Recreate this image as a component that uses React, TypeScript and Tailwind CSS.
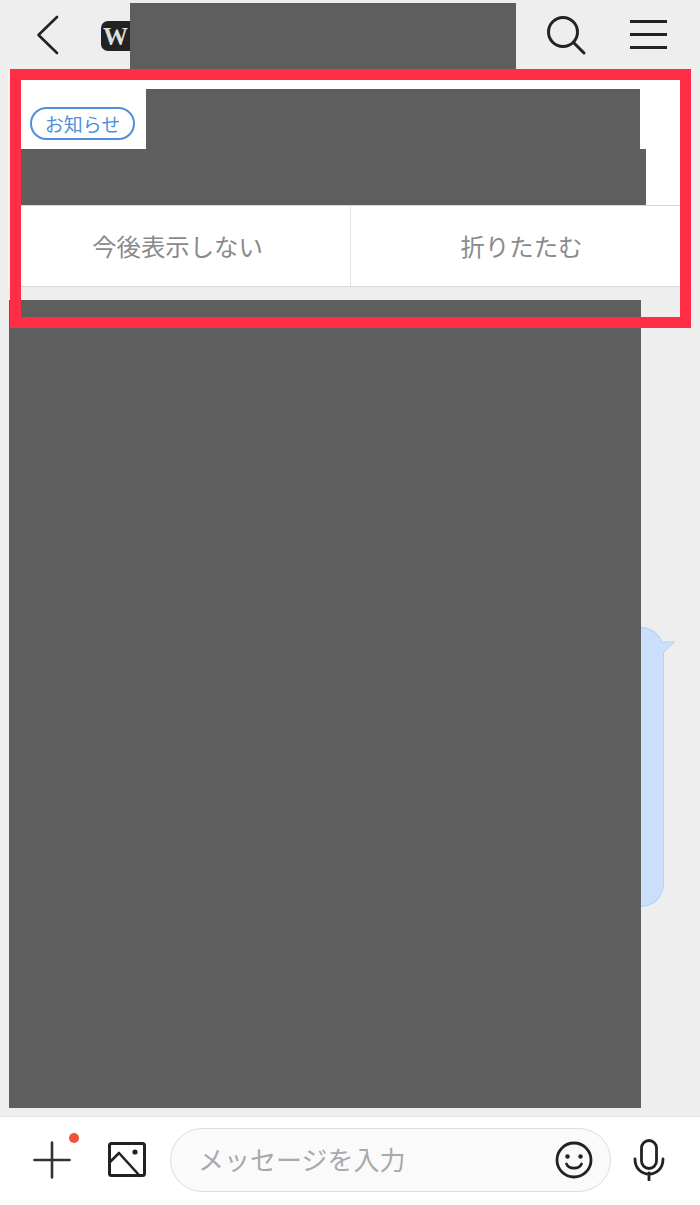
import React from "react";

const Redacted: React.FC<{ className: string }> = ({ className }) => (
  <div className={`bg-[#5e5e5e] ${className}`} />
);

const App: React.FC = () => {
  return (
    <div className="relative flex min-h-[1205px] w-[700px] flex-col overflow-hidden bg-[#eeeeee] font-['Noto_Sans_CJK_JP',sans-serif]">
      {/* Header */}
      <header className="flex h-[69px] shrink-0 items-center">
        <svg className="ml-[34px] mt-[1px] h-[44px] w-[28px]" viewBox="0 0 28 44" fill="none">
          <path d="M23 4 L4.5 22 L23 40" stroke="#222" strokeWidth="2.6" strokeLinecap="round" strokeLinejoin="round" />
        </svg>
        <div className="ml-[39px] mt-[3px] flex h-[30px] w-[29px] items-center justify-center rounded-l-[7px] bg-[#222222] font-['Liberation_Serif',serif] text-[25px] font-bold leading-none text-[#dedede]">
          W
        </div>
        <Redacted className="h-[66px] w-[386px] self-end" />
        <svg className="ml-[28px] h-[44px] w-[44px]" viewBox="0 0 44 44" fill="none">
          <circle cx="19" cy="19" r="14.5" stroke="#222" strokeWidth="3" />
          <path d="M29.5 29.5 L40 40" stroke="#222" strokeWidth="3" strokeLinecap="round" />
        </svg>
        <div className="ml-[42px] flex w-[37px] flex-col gap-[10px]">
          <div className="h-[3px] bg-[#222222]" />
          <div className="h-[3px] bg-[#222222]" />
          <div className="h-[3px] bg-[#222222]" />
        </div>
      </header>

      {/* Notice card */}
      <section className="relative ml-[8px] mt-[3px] h-[215px] w-[684px] shrink-0 border-x-2 border-[#f4f4f4] bg-white">
        <div className="flex h-[133px] items-start pl-[20px] pt-[35px]">
          <span className="flex h-[33px] w-[105px] items-center justify-center rounded-full border-2 border-[#4f8fd6] text-[19px] leading-none text-[#4f8fd6]">
            お知らせ
          </span>
        </div>
        <Redacted className="absolute left-[136px] top-[17px] h-[60px] w-[494px]" />
        <Redacted className="absolute left-[11px] top-[77px] h-[56px] w-[625px]" />
        <div className="flex h-[82px] border-y border-[#d8d8d8] text-[24.4px] text-[#8a8a8a]">
          <button className="flex w-[341px] items-center justify-center border-r border-[#e2e2e2] pr-[5px]">
            今後表示しない
          </button>
          <button className="flex flex-1 items-center justify-center pl-[2px]">折りたたむ</button>
        </div>
      </section>

      {/* Chat area */}
      <main className="flex flex-1 pl-[9px] pt-[13px]">
        <Redacted className="h-[808px] w-[632px]" />
        <div className="relative mt-[327px] h-[280px] w-[23px] rounded-r-[24px] border border-l-0 border-[#b9d0ec] bg-[#c9dffb]">
          <svg className="absolute left-[21px] top-[10px] h-[24px] w-[14px]" viewBox="0 0 14 24" fill="none">
            <path d="M0 4 L12.5 4 L0 16 Z" fill="#c9dffb" />
            <path d="M0 4 L12.5 4 L0 16" stroke="#b9d0ec" strokeWidth="1" />
          </svg>
        </div>
      </main>

      {/* Input bar */}
      <footer className="flex h-[89px] shrink-0 items-center border-t border-[#e6e6e6] bg-white pb-[2px]">
        <div className="relative ml-[33px] h-[38px] w-[38px]">
          <svg className="h-[38px] w-[38px]" viewBox="0 0 38 38" fill="none">
            <path d="M19 1.5 V36.5 M1.5 19 H36.5" stroke="#333" strokeWidth="2.6" strokeLinecap="round" />
          </svg>
          <span className="absolute left-[36px] top-[-8px] h-[10px] w-[10px] rounded-full bg-[#f0523a]" />
        </div>
        <svg className="ml-[37px] h-[36px] w-[38px]" viewBox="0 0 38 36" fill="none">
          <rect x="1.5" y="1.5" width="35" height="32" rx="2" stroke="#222" strokeWidth="3" />
          <path d="M2 20 L11 11 L31 33" stroke="#222" strokeWidth="2.6" strokeLinejoin="round" />
          <circle cx="27" cy="10" r="2.6" fill="#222" />
        </svg>
        <div className="ml-[24px] flex h-[64px] w-[441px] items-center rounded-full border border-[#dddddd] bg-[#fafafa] pl-[27px] pr-[17px]">
          <span className="flex-1 pb-[2px] text-[26px] leading-none text-[#a9a9a9]">メッセージを入力</span>
          <svg className="h-[38px] w-[38px]" viewBox="0 0 38 38" fill="none">
            <circle cx="19" cy="19" r="17" stroke="#222" strokeWidth="2.8" />
            <circle cx="12.5" cy="15.5" r="2.2" fill="#222" />
            <circle cx="25.5" cy="15.5" r="2.2" fill="#222" />
            <path d="M11.5 23 C14 28.5 24 28.5 26.5 23" stroke="#222" strokeWidth="2.8" strokeLinecap="round" />
          </svg>
        </div>
        <svg className="ml-[22px] h-[42px] w-[32px]" viewBox="0 0 32 42" fill="none">
          <rect x="8.5" y="1.5" width="15" height="28" rx="7.5" stroke="#222" strokeWidth="2.8" />
          <path d="M2 20 C2 40 30 40 30 20 M16 34 V41" stroke="#222" strokeWidth="2.8" strokeLinecap="round" />
        </svg>
      </footer>

      {/* Red highlight frame over the notice */}
      <div className="pointer-events-none absolute left-[10px] top-[69px] h-[259px] w-[681px] border-[11px] border-[#ff2d46]" />
    </div>
  );
};

export default App;
